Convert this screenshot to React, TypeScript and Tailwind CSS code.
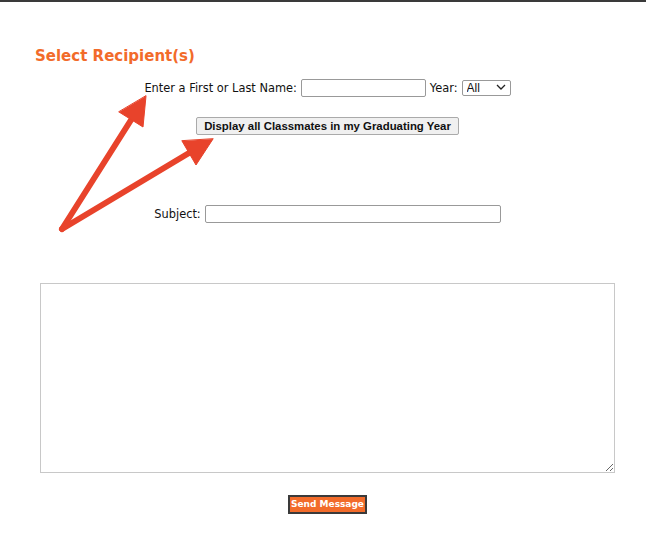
import React from 'react';

const ORANGE = 'text-[#f26b2a]';

const App: React.FC = () => {
  return (
    <div className="relative w-[646px] h-[538px] bg-white overflow-hidden font-['DejaVu_Sans',Verdana,sans-serif] text-[#111]">
      {/* top edge line */}
      <div className="w-full h-[2px] bg-[#3a3a3a]"></div>

      <div className="pl-[40px] pr-[31px] pt-[44px]">
        <h2 className={`-ml-[5px] text-[15px] leading-[20px] font-bold ${ORANGE}`}>Select Recipient(s)</h2>

        {/* name / year search */}
        <div className="mt-[13px] flex items-center justify-center gap-[4px] text-[11.4px] leading-[18px]">
          <label htmlFor="name">Enter a First or Last Name:</label>
          <input id="name" type="text" className="w-[125px] h-[18px] border border-[#999] rounded-[2px] px-1 outline-none" />
          <label htmlFor="year">Year:</label>
          <div className="relative">
            <select id="year" className="appearance-none w-[49px] h-[16px] border border-[#999] rounded-[2px] pl-[4px] text-[12px] leading-[14px] font-['Liberation_Sans',Arial,sans-serif] bg-white outline-none">
              <option>All</option>
            </select>
            <svg className="absolute right-[5px] top-[5px] pointer-events-none" width="10" height="6" viewBox="0 0 10 6">
              <path d="M1 1l4 4 4-4" fill="none" stroke="#222" strokeWidth="1.3" />
            </svg>
          </div>
        </div>

        <div className="mt-[20px] flex justify-center">
          <button className="h-[18px] px-[7px] border border-[#aaa] rounded-[2px] bg-[#f0f0f0] text-[11.4px] leading-[16px] font-bold font-['Liberation_Sans',Arial,sans-serif]">
            Display all Classmates in my Graduating Year
          </button>
        </div>

        <div className="mt-[70px] flex items-center justify-center gap-[4px] text-[11.4px] leading-[18px]">
          <label htmlFor="subject">Subject:</label>
          <input id="subject" type="text" className="w-[296px] h-[18px] border border-[#999] rounded-[2px] px-1 outline-none" />
        </div>

        <textarea className="mt-[60px] block w-full h-[190px] border border-[#c8c8c8] outline-none p-1 text-[12px]"></textarea>

        <div className="mt-[22px] flex justify-center">
          <button className="w-[79px] h-[19px] bg-[#f26b2a] border-2 border-[#3a3a3a] text-white text-[9px] leading-[15px] font-bold">
            Send Message
          </button>
        </div>
      </div>

      {/* annotation arrows */}
      <svg className="absolute inset-0 pointer-events-none" width="646" height="538" viewBox="0 0 646 538">
        <g fill="#e8432b" stroke="#e8432b" strokeLinecap="round">
          <line x1="62" y1="229" x2="131" y2="120" strokeWidth="6" />
          <polygon points="146,96 143,127 119,112" strokeWidth="1" strokeLinejoin="round" />
          <line x1="62" y1="229" x2="189" y2="153" strokeWidth="6" />
          <polygon points="213,139 196,165 182,141" strokeWidth="1" strokeLinejoin="round" />
        </g>
      </svg>
    </div>
  );
};

export default App;
